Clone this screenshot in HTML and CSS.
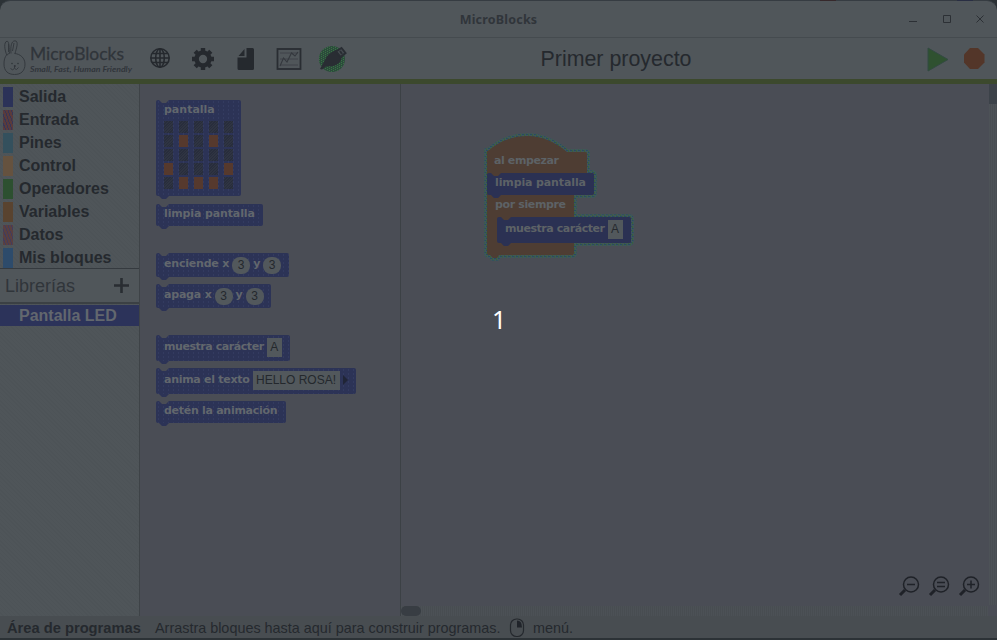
FILE: index.html
```html
<!DOCTYPE html>
<html lang="es">
<head>
<meta charset="utf-8">
<title>MicroBlocks</title>
<link rel="stylesheet" href="styles.css">
</head>
<body>
<div class="app">
  <header class="titlebar">
    <i class="behind behind-a"></i><i class="behind behind-b"></i>
    <span class="window-title">MicroBlocks</span>
    <svg class="window-buttons" width="80" height="16" viewBox="0 0 80 16"><path d="M3 13.500h8M37.500 7.500h7v7h-7zM70.500 7.500l7 7M77.500 7.500l-7 7" fill="none" stroke="#2c3035"/></svg>
  </header>
  <div class="toolbar">
    <svg class="logo" width="134" height="41" viewBox="0 0 134 41">
      <g fill="none" stroke="#34393e" stroke-width="1">
        <path d="M7 17.500C4.500 12 3.500 4 7 3.200C9.500 3 9 11 9.500 15.500M11 15.500C10.500 9 11 3 15 2.800C19 3 16.500 10 15 15.500M8.500 14V6M12.500 13l1.500-8"/>
        <path d="M9.500 15.500C6 16 4 20 4 26C4 33 8 36.500 14.500 36.500S25 33 25 26C25 20 20 15.800 14.500 15.500"/>
        <path d="M14.500 28v2M10.500 30.500q2 2.500 4 0q2 2.500 4-1"/>
      </g>
      <g fill="#30353a"><circle cx="12" cy="25.500" r=".8"/><circle cx="18" cy="25.500" r=".8"/><circle cx="14.800" cy="28" r="1"/></g>
      <text class="logo-name" x="30" y="21.500" textLength="94" lengthAdjust="spacingAndGlyphs">MicroBlocks</text>
      <text class="logo-tag" x="30" y="34" textLength="102" lengthAdjust="spacingAndGlyphs">Small, Fast, Human Friendly</text>
    </svg>
    <svg class="tools" width="200" height="41" viewBox="0 0 200 41">
      <g fill="none" stroke="#25292e" stroke-width="1.600"><circle cx="11" cy="20" r="9.200"/><ellipse cx="11" cy="20" rx="4.300" ry="9.200"/><path d="M11 11v18M2 20h18M3.500 15.500h15M3.500 24.500h15"/></g>
      <g fill="none" stroke="#25292e"><circle cx="54" cy="21" r="6.400" stroke-width="4.500"/><path stroke-width="4.400" d="M54 10v4M54 28v4M43 21h4M61 21h4M46.200 13.200l3 3M58.800 25.800l3 3M46.200 28.800l3-3M58.800 16.200l3-3"/></g>
      <path fill="#25292e" d="M97.500 10h6q1.500 0 1.500 1.500v19q0 1.500-1.500 1.500h-13.500q-1.500 0-1.500-1.500V19.500h9zM95.500 11v7h-6z"/>
      <g fill="none" stroke="#292d32"><rect x="128.500" y="11" width="23" height="20" stroke-width="1.800"/><path stroke="#3a3e44" stroke-width=".8" d="M131 15h18M131 21h18M131 27h18"/><path stroke-width="1.100" stroke="#34383e" d="M131 28l3.500-8 3.500 4 4.500-9 3.500 3 3-4"/></g>
      <circle cx="183" cy="21" r="13" fill="#2b4b3b"/><circle cx="183" cy="21" r="13" fill="url(#greenDots)"/>
      <path fill="#292d33" d="M171 31l5-9q2-6 11-10l6 7q-2 8-9 9l-7 .5-4 3z"/>
      <path fill="#454b50" stroke="#292d33" stroke-width="2" d="M187 13.500l5.500-3.500 4 5-5 4zM191 13l2 3"/>
      <defs><pattern id="greenDots" width="4" height="2" patternUnits="userSpaceOnUse"><path fill="#397144" d="M0 0h1v1H0zM2 1h1v1H2z"/></pattern></defs>
    </svg>
    <h1 class="project">Primer proyecto</h1>
    <svg class="run" width="60" height="28" viewBox="0 0 60 28"><path fill="#2f5130" d="M3 3l20 11.500L3 26z"/><path fill="none" stroke="#334a42" d="M3 3l20 11.500L3 26z"/><path fill="#533629" d="M45 3h8l6.500 6.500v8L53 24h-8l-6-6.500v-8z"/></svg>
  </div>
  <main class="workspace">
    <aside class="sidebar">
      <ul class="categories">
        <li><i class="c-out"></i>Salida</li>
        <li><i class="c-in"></i>Entrada</li>
        <li><i class="c-pins"></i>Pines</li>
        <li><i class="c-control"></i>Control</li>
        <li><i class="c-ops"></i>Operadores</li>
        <li><i class="c-vars"></i>Variables</li>
        <li><i class="c-data"></i>Datos</li>
        <li><i class="c-mine"></i>Mis bloques</li>
      </ul>
      <div class="libraries"><span>Librerías</span><svg width="15" height="15" viewBox="0 0 15 15"><path d="M7.500 0v15M0 7.500h15" stroke="#292d32" stroke-width="2.600"/></svg></div>
      <div class="library-item">Pantalla LED</div>
    </aside>
    <section class="palette">
      <div class="block display"><span class="label">pantalla</span>
        <div class="leds"><i></i><i></i><i></i><i></i><i></i><i></i><i class="on"></i><i></i><i class="on"></i><i></i><i></i><i></i><i></i><i></i><i></i><i class="on"></i><i></i><i></i><i></i><i class="on"></i><i></i><i class="on"></i><i class="on"></i><i class="on"></i><i></i></div>
      </div>
      <div class="block clear"><span class="label">limpia pantalla</span></div>
      <div class="block plot"><span class="label">enciende x</span><b class="num">3</b><span class="label">y</span><b class="num">3</b></div>
      <div class="block unplot"><span class="label">apaga x</span><b class="num">3</b><span class="label">y</span><b class="num">3</b></div>
      <div class="block show"><span class="label">muestra carácter</span><b class="field">A</b></div>
      <div class="block scroll"><span class="label">anima el texto</span><b class="field">HELLO ROSA!</b><i class="more"></i></div>
      <div class="block stop"><span class="label">detén la animación</span></div>
    </section>
    <section class="canvas">
      <svg class="script" width="160" height="135" viewBox="480 128 160 135">
        <defs><path id="outline" d="M488 151Q506 136 527 136Q548 136 567 152H585q2 0 2 2V173H592q2 0 2 2v18q0 2-2 2H574V217H629q2 0 2 2v22q0 2-2 2H574v10q0 2-2 2H499l-2 3h-4l-3-3h-1q-2 0-2-2V151z"/>
        <pattern id="glowDots" width="4" height="4" patternUnits="userSpaceOnUse"><path fill="#294b61" d="M0 0h2v1H0zM2 2h2v1H2z"/><path fill="#39603b" d="M2 0h1v2H2zM0 2h1v2H0z"/></pattern></defs>
        <use href="#outline" fill="none" stroke="#40565a" stroke-width="6"/>
        <use href="#outline" fill="none" stroke="url(#glowDots)" stroke-width="5"/>
        <use href="#outline" fill="#4e3d33"/>
        <path fill="#2b3153" d="M489 173h2l3 3h4l3-3H592q2 0 2 2v18q0 2-2 2H501l-3 3h-4l-3-3h-2q-2 0-2-2v-18q0-2 2-2zM499 217h2l3 3h4l3-3H629q2 0 2 2v22q0 2-2 2H511l-3 3h-4l-3-3h-2q-2 0-2-2v-22q0-2 2-2z"/>
        <path fill="#52585c" d="M608 220h15v19h-15z"/>
        <g class="script-label"><text x="494" y="164" textLength="65">al empezar</text><text x="495" y="186" textLength="91">limpia pantalla</text><text x="495" y="208" textLength="71">por siempre</text><text x="505" y="232" textLength="100">muestra carácter</text></g>
        <text class="script-value" x="611" y="233">A</text>
      </svg>
      <span class="countdown">1</span>
      <svg class="zooms" width="84" height="22" viewBox="0 0 84 22"><g fill="none" stroke="#1f2228" stroke-width="1.500"><circle cx="13" cy="8.500" r="7.500"/><circle cx="43" cy="8.500" r="7.500"/><circle cx="73" cy="8.500" r="7.500"/><path d="M9 8.500h8M39 6.500h8M39 10.500h8M69 8.500h8M73 4.500v8"/><path stroke-width="3" d="M7 14l-5 5M37 14l-5 5M67 14l-5 5"/></g></svg>
      <i class="vbar"></i><i class="hbar"></i>
    </section>
  </main>
  <footer class="status"><strong>Área de programas</strong><span class="hint">Arrastra bloques hasta aquí para construir programas.</span><svg width="16" height="20" viewBox="0 0 16 20"><rect x="1.500" y="1" width="13" height="17.500" rx="6" fill="none" stroke="#24282d" stroke-width="1.200"/><path d="M8 2.500q5 0 5 7H8z" fill="#20242a"/></svg><span>menú.</span></footer>
</div>
</body>
</html>
```
FILE: styles.css
```css
* { box-sizing: border-box; }
body { margin: 0; width: 997px; height: 640px; overflow: hidden; background: #2c3236; font-family: "Liberation Sans", sans-serif; color: #25292e; }
.app { display: flex; flex-direction: column; height: 640px; }
svg { display: block; flex: none; }
.titlebar { position: relative; height: 38px; flex: none; display: flex; justify-content: center; align-items: center; background: #50565a; border-top: 1px solid #363c42; border-bottom: 1px solid #454b4f; border-radius: 10px 10px 0 0; }
.window-title { font: bold 12.500px "Noto Sans", sans-serif; letter-spacing: .2px; color: #30353a; }
.window-buttons { position: absolute; right: 11px; top: 7px; }
.behind { position: absolute; top: -1px; width: 16px; height: 1px; }
.behind-a { left: 820px; background: #36282b; }
.behind-b { left: 957px; background: #292e43; }
.toolbar { display: flex; align-items: flex-start; height: 41px; flex: none; background: #50565a; }
.logo-name { font: 18px Lato, sans-serif; fill: #30353a; stroke: #30353a; stroke-width: .3px; }
.logo-tag { font: italic bold 8px Lato, sans-serif; fill: #30353a; }
.tools { margin-left: 15px; }
.project { width: 390px; margin: 9px 0 0 72px; text-align: center; font-size: 21.400px; line-height: 25px; font-weight: 400; }
.run { margin: 7px 0 0 114px; }
.workspace { display: flex; height: 537px; flex: none; border-top: 5px solid #3c492d; }
.sidebar { width: 140px; flex: none; border-right: 1px solid #3e4347; background: repeating-linear-gradient(45deg, #4f5559 0 2px, #4d5357 2px 3px); }
.categories { list-style: none; margin: 0; padding: 1px 0 0 3px; height: 185px; border-bottom: 1px solid #353a3f; }
.categories li { display: flex; align-items: center; height: 23px; font-size: 16px; font-weight: bold; gap: 6px; }
.categories i { width: 10px; height: 20px; }
.c-out { background: #2b3258; }
.c-in { background: repeating-linear-gradient(70deg, #5a3b3c 0 2px, #373657 2px 3px); }
.c-pins { background: #34505d; }
.c-control { background: #65523f; }
.c-ops { background: #2d5030; }
.c-vars { background: #59432f; }
.c-data { background: repeating-linear-gradient(70deg, #5a4040 0 2px, #433c5b 2px 3px); }
.c-mine { background: #2d4b6b; }
.libraries { display: flex; justify-content: space-between; align-items: center; height: 35px; padding: 0 10px 0 5px; border-bottom: 2px solid #3b4044; background: #50565a; font-size: 18px; color: #30353a; }
.libraries span { padding-top: 1px; }
.library-item { height: 21px; margin-top: 1px; padding-left: 19px; background: #2c335a; color: #62676e; font-weight: bold; font-size: 16px; line-height: 21px; }
.palette { width: 261px; flex: none; padding: 16px 0 0 16px; border-right: 1px solid #3c4145; background: #4a4d55; }
.block { position: relative; display: flex; align-items: center; padding: 0 3px 2px 8px; border-radius: 2px; background-color: #2c3356; background-image: radial-gradient(circle, #333b60 0 .7px, transparent .8px); background-size: 5px 4px; }
.block::before { content: ""; position: absolute; left: 3px; top: 0; width: 10px; height: 3px; background: #4a4d55; clip-path: polygon(0 0, 100% 0, 70% 100%, 30% 100%); }
.block::after { content: ""; position: absolute; left: 3px; bottom: -3px; width: 10px; height: 3px; background: #2c3356; clip-path: polygon(0 0, 100% 0, 70% 100%, 30% 100%); }
.label { font: bold 11px/14px "DejaVu Sans", sans-serif; color: #62676d; white-space: nowrap; }
.display { width: 85px; height: 96px; display: block; padding-top: 3px; }
.display .label { display: block; }
.leds { display: grid; grid-template-columns: repeat(5, 9px); gap: 2px 6px; margin-top: 4px; }
.leds i { height: 12px; background: repeating-linear-gradient(135deg, #282d3c 0 1px, #2f3442 1px 2px); }
.leds .on { background: #56392d; }
.clear { width: 107px; height: 22px; margin-top: 8px; padding-bottom: 2px; }
.clear .label { letter-spacing: -.13px; }
.plot { width: 133px; height: 24px; margin-top: 27px; }
.unplot { width: 115px; height: 24px; margin-top: 7px; }
.plot .label, .unplot .label { letter-spacing: -.2px; }
.show { width: 134px; height: 26px; margin-top: 27px; }
.show .label { letter-spacing: -.44px; }
.scroll { width: 200px; height: 26px; margin-top: 7px; }
.scroll .label { letter-spacing: -.28px; }
.stop { width: 130px; height: 22px; margin-top: 7px; padding-bottom: 2px; }
.stop .label { letter-spacing: -.28px; }
.num, .field { font-weight: 400; font-size: 12px; text-align: center; background: #52585c; color: #24282d; }
.num { width: 18px; height: 17px; margin: 2px 3px 0; border-radius: 8px; line-height: 17px; }
.field { height: 19px; margin: 1px 0 0 3px; padding: 0 3.500px; line-height: 19px; white-space: nowrap; }
.more { margin-left: 3px; border: 5px solid transparent; border-left: 5px solid #202536; border-right: 0; }
.canvas { position: relative; flex: 1; background: #4a4d55; }
.script { position: absolute; left: 79px; top: 44px; }
.script-label { font: bold 11px "DejaVu Sans", sans-serif; fill: #5d6266; }
.script-value { font-size: 12px; fill: #25292e; }
.countdown { position: absolute; left: 91px; top: 218px; font: 25px/34px "Noto Sans", sans-serif; color: #fff; }
.zooms { position: absolute; left: 497px; bottom: 18px; }
.vbar { position: absolute; right: 0; top: 0; bottom: 11px; width: 8px; background: linear-gradient(#3c4249 0 20px, transparent 20px), repeating-linear-gradient(90deg, #4d5257 0 1px, #494d52 1px 2px); }
.hbar { position: absolute; left: 0; right: 9px; bottom: 0; height: 10px; background: repeating-linear-gradient(90deg, #4c5156 0 1px, #484d51 1px 2px); }
.hbar::before { content: ""; display: block; width: 20px; height: 10px; border-radius: 5px; background: #383d43; }
.status { display: flex; align-items: center; height: 22px; padding-left: 7px; font-size: 14.400px; background: #484d51; padding-top: 2px; }
.status strong { width: 148px; flex: none; font-size: 14.700px; margin-top: -1px; }
.status .hint { width: 354px; flex: none; white-space: nowrap; }
.status svg { margin-right: 8px; }
```
